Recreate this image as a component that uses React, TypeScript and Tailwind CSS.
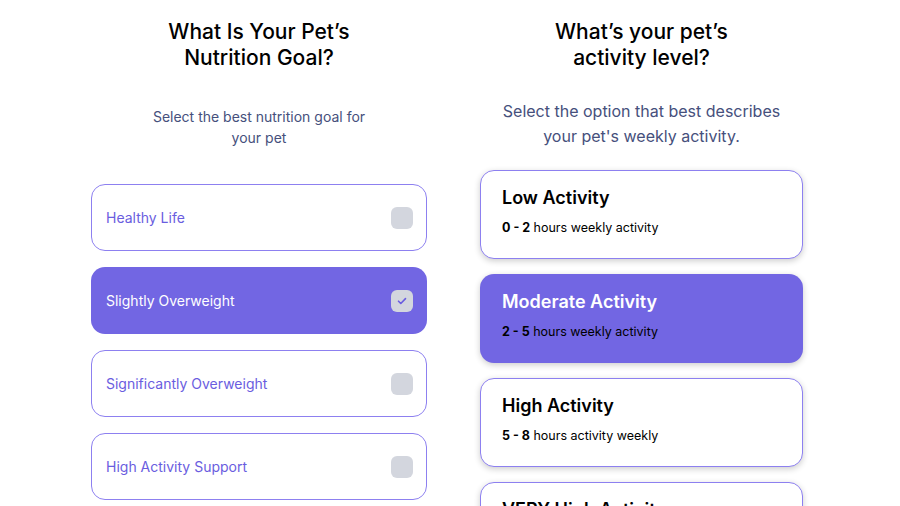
import React from 'react';

const goals = [
  { label: 'Healthy Life', selected: false },
  { label: 'Slightly Overweight', selected: true },
  { label: 'Significantly Overweight', selected: false },
  { label: 'High Activity Support', selected: false },
];

const levels = [
  { title: 'Low Activity', range: '0 - 2', rest: 'hours weekly activity', selected: false },
  { title: 'Moderate Activity', range: '2 - 5', rest: 'hours weekly activity', selected: true },
  { title: 'High Activity', range: '5 - 8', rest: 'hours activity weekly', selected: false },
  { title: 'VERY High Activity', range: '8+', rest: 'hours weekly activity', selected: false },
];

function Check() {
  return (
    <svg width="12" height="12" viewBox="0 0 12 12" fill="none">
      <path d="M2.5 6.2l2.3 2.3 4.7-4.9" stroke="#6a5de0" strokeWidth="1.6" strokeLinecap="round" strokeLinejoin="round" />
    </svg>
  );
}

export default function App() {
  return (
    <div className="w-[900px] h-[506px] overflow-hidden bg-white font-['Inter',sans-serif]">
      <div className="flex">
        <div className="w-[518px] pl-[91px] pr-[91px] pt-[19px] flex flex-col items-center">
          <h1 className="text-[21px] leading-[26px] font-medium text-black text-center">
            What Is Your Pet’s
            <br />
            Nutrition Goal?
          </h1>
          <p className="mt-[35px] text-[14px] leading-[21px] text-[#46507c] text-center">
            Select the best nutrition goal for
            <br />
            your pet
          </p>
          <div className="mt-[36px] w-[336px] flex flex-col gap-4">
            {goals.map((g) => (
              <div
                key={g.label}
                className={
                  g.selected
                    ? 'h-[67px] rounded-[14px] bg-[#7266e3] flex items-center justify-between pl-[15px] pr-[14px]'
                    : 'h-[67px] rounded-[14px] border-[1.5px] border-[#8d80f0] bg-white flex items-center justify-between pl-[14px] pr-[13px]'
                }
              >
                <span className={g.selected ? 'text-[14px] text-white' : 'text-[14px] text-[#6a5de0]'}>{g.label}</span>
                <span className="w-[22px] h-[22px] rounded-[6px] bg-[#d3d6de] flex items-center justify-center">
                  {g.selected && <Check />}
                </span>
              </div>
            ))}
          </div>
        </div>
        <div className="w-[323px] ml-[-38px] pt-[19px] flex flex-col items-center">
          <h1 className="text-[21px] leading-[26px] font-medium text-black text-center">
            What’s your pet’s
            <br />
            activity level?
          </h1>
          <p className="mt-[28px] text-[16px] leading-[25px] text-[#46507c] text-center whitespace-nowrap">
            Select the option that best describes
            <br />
            your pet's weekly activity.
          </p>
          <div className="mt-[21px] w-[323px] flex flex-col gap-[15px]">
            {levels.map((l) => (
              <div
                key={l.title}
                className={
                  l.selected
                    ? 'h-[89px] shrink-0 rounded-[14px] bg-[#7266e3] shadow-[0_2px_6px_rgba(0,0,0,0.2)] pl-[22px] pt-[16px]'
                    : 'h-[89px] shrink-0 rounded-[14px] border-[1.5px] border-[#8d80f0] bg-white shadow-[0_2px_6px_rgba(0,0,0,0.2)] pl-[21px] pt-[15px]'
                }
              >
                <div className={l.selected ? 'text-[18px] leading-[24px] font-semibold text-white' : 'text-[18px] leading-[24px] font-semibold text-black'}>
                  {l.title}
                </div>
                <div className="mt-[10px] text-[12.5px] leading-[16px] text-black">
                  <span className="font-bold">{l.range}</span> {l.rest}
                </div>
              </div>
            ))}
          </div>
        </div>
      </div>
    </div>
  );
}
